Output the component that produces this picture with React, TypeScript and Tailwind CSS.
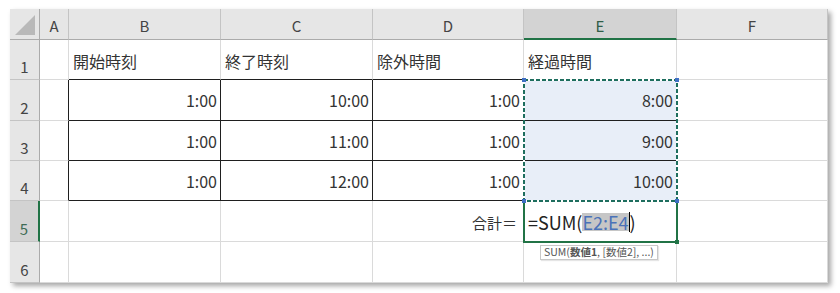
import React from "react";

const font = { fontFamily: '"Noto Sans CJK JP", "Noto Sans", sans-serif' };

const colLetters = ["A", "B", "C", "D", "E", "F"];

const cells: Record<string, string> = {
  B1: "開始時刻",
  C1: "終了時刻",
  D1: "除外時間",
  E1: "経過時間",
  B2: "1:00",
  C2: "10:00",
  D2: "1:00",
  E2: "8:00",
  B3: "1:00",
  C3: "11:00",
  D3: "1:00",
  E3: "9:00",
  B4: "1:00",
  C4: "12:00",
  D4: "1:00",
  E4: "10:00",
};

function cellClass(col: number, row: number) {
  // col 0 = A ... 5 = F, row 1..6
  const inTable = row >= 2 && row <= 4 && col >= 1 && col <= 4;
  const right = inTable || (col === 0 && row >= 2 && row <= 4) ? "border-r-[#1f1f1f]" : "border-r-[#dadada]";
  const bottom =
    (row >= 1 && row <= 4 && col >= 1 && col <= 4) ? "border-b-[#1f1f1f]" : "border-b-[#dadada]";
  const bg = col === 4 && row >= 2 && row <= 4 ? "bg-[#e8eef8]" : "bg-white";
  return `border-r border-b ${right} ${bottom} ${bg}`;
}

export default function App() {
  return (
    <div className="w-[840px] h-[293px] bg-white pl-[10px] pt-[9px]" style={font}>
      <div className="relative w-[818px] h-[274px] shadow-[3px_3px_5px_rgba(0,0,0,0.35)]">
        <div className="grid grid-cols-[30px_29px_152px_152px_151px_153px_151px] grid-rows-[31px_40px_41px_40px_40px_41px_41px]">
          {/* corner */}
          <div className="relative bg-[#e6e6e6] border-r border-b border-[#ababab]">
            <svg className="absolute right-[4px] bottom-[4px]" width="20" height="20" viewBox="0 0 20 20">
              <polygon points="20,0 20,20 0,20" fill="#b9b9b9" />
            </svg>
          </div>
          {colLetters.map((c) => (
            <div
              key={c}
              className={`flex items-center justify-center text-[15px] pt-[5px] border-r ${
                c === "E"
                  ? "bg-[#d3d3d3] text-[#2f5e47] border-b-2 border-b-[#217346] border-r-[#c4c4c4]"
                  : "bg-[#e6e6e6] text-[#444] border-b border-b-[#ababab] border-r-[#c4c4c4]"
              }`}
            >
              {c}
            </div>
          ))}
          {[1, 2, 3, 4, 5, 6].map((r) => (
            <React.Fragment key={r}>
              <div
                className={`flex items-end justify-center pb-[1px] text-[15px] border-b border-b-[#c4c4c4] ${
                  r === 5
                    ? "bg-[#d3d3d3] text-[#3e6b55] border-r-2 border-r-[#217346]"
                    : "bg-[#e6e6e6] text-[#444] border-r border-r-[#ababab]"
                }`}
              >
                {r}
              </div>
              {colLetters.map((c, ci) => {
                const v = cells[`${c}${r}`];
                const isText = r === 1;
                return (
                  <div
                    key={c}
                    className={`flex items-center text-[16px] text-[#333] ${cellClass(ci, r)} ${
                      isText ? "justify-start pl-[4px] pt-[3px]" : "justify-end pr-[3px]"
                    }`}
                  >
                    {c === "D" && r === 5 ? (
                      <span className="text-[15px] pt-[4px] pr-[3px]">合計＝</span>
                    ) : c === "E" && r === 5 ? null : (
                      v
                    )}
                  </div>
                );
              })}
            </React.Fragment>
          ))}
        </div>

        {/* active cell E5 */}
        <div className="absolute left-[513px] top-[191px] w-[155px] h-[43px] border-2 border-[#217346] flex items-center pl-[3px] pt-[1px] text-[18px] text-[#222]">
          <span>=SUM(</span>
          <span className="bg-[#c6c6c6] text-[#4a72b8] leading-[18px]">E2:E4</span>
          <span className="w-[1px] h-[20px] bg-black"></span>
          <span>)</span>
        </div>

        {/* copy range marching ants E2:E4 */}
        <svg className="absolute left-[513px] top-[70px]" width="155" height="123" viewBox="0 0 155 123">
          <rect x="1" y="1" width="153" height="121" fill="none" stroke="#ffffff" strokeWidth="2" />
          <rect x="1" y="1" width="153" height="121" fill="none" stroke="#1e6e5e" strokeWidth="2" strokeDasharray="4 2" />
        </svg>
        <div className="absolute left-[512px] top-[69px] w-[4px] h-[4px] bg-[#3f6fc4]" />
        <div className="absolute left-[665px] top-[69px] w-[4px] h-[4px] bg-[#3f6fc4]" />
        <div className="absolute left-[512px] top-[190px] w-[4px] h-[4px] bg-[#3f6fc4]" />
        <div className="absolute left-[665px] top-[190px] w-[4px] h-[4px] bg-[#3f6fc4]" />
        <div className="absolute left-[665px] top-[231px] w-[4px] h-[4px] bg-[#217346]" />

        {/* function tooltip */}
        <div className="absolute left-[530px] top-[236px] h-[15px] px-[3px] flex items-center bg-white border border-[#c8c8c8] text-[10.5px] text-[#555] leading-none whitespace-nowrap shadow-[1px_1px_1px_rgba(0,0,0,0.1)]">
          SUM(<span className="font-bold">数値1</span>, [数値2], ...)
        </div>
      </div>
    </div>
  );
}
